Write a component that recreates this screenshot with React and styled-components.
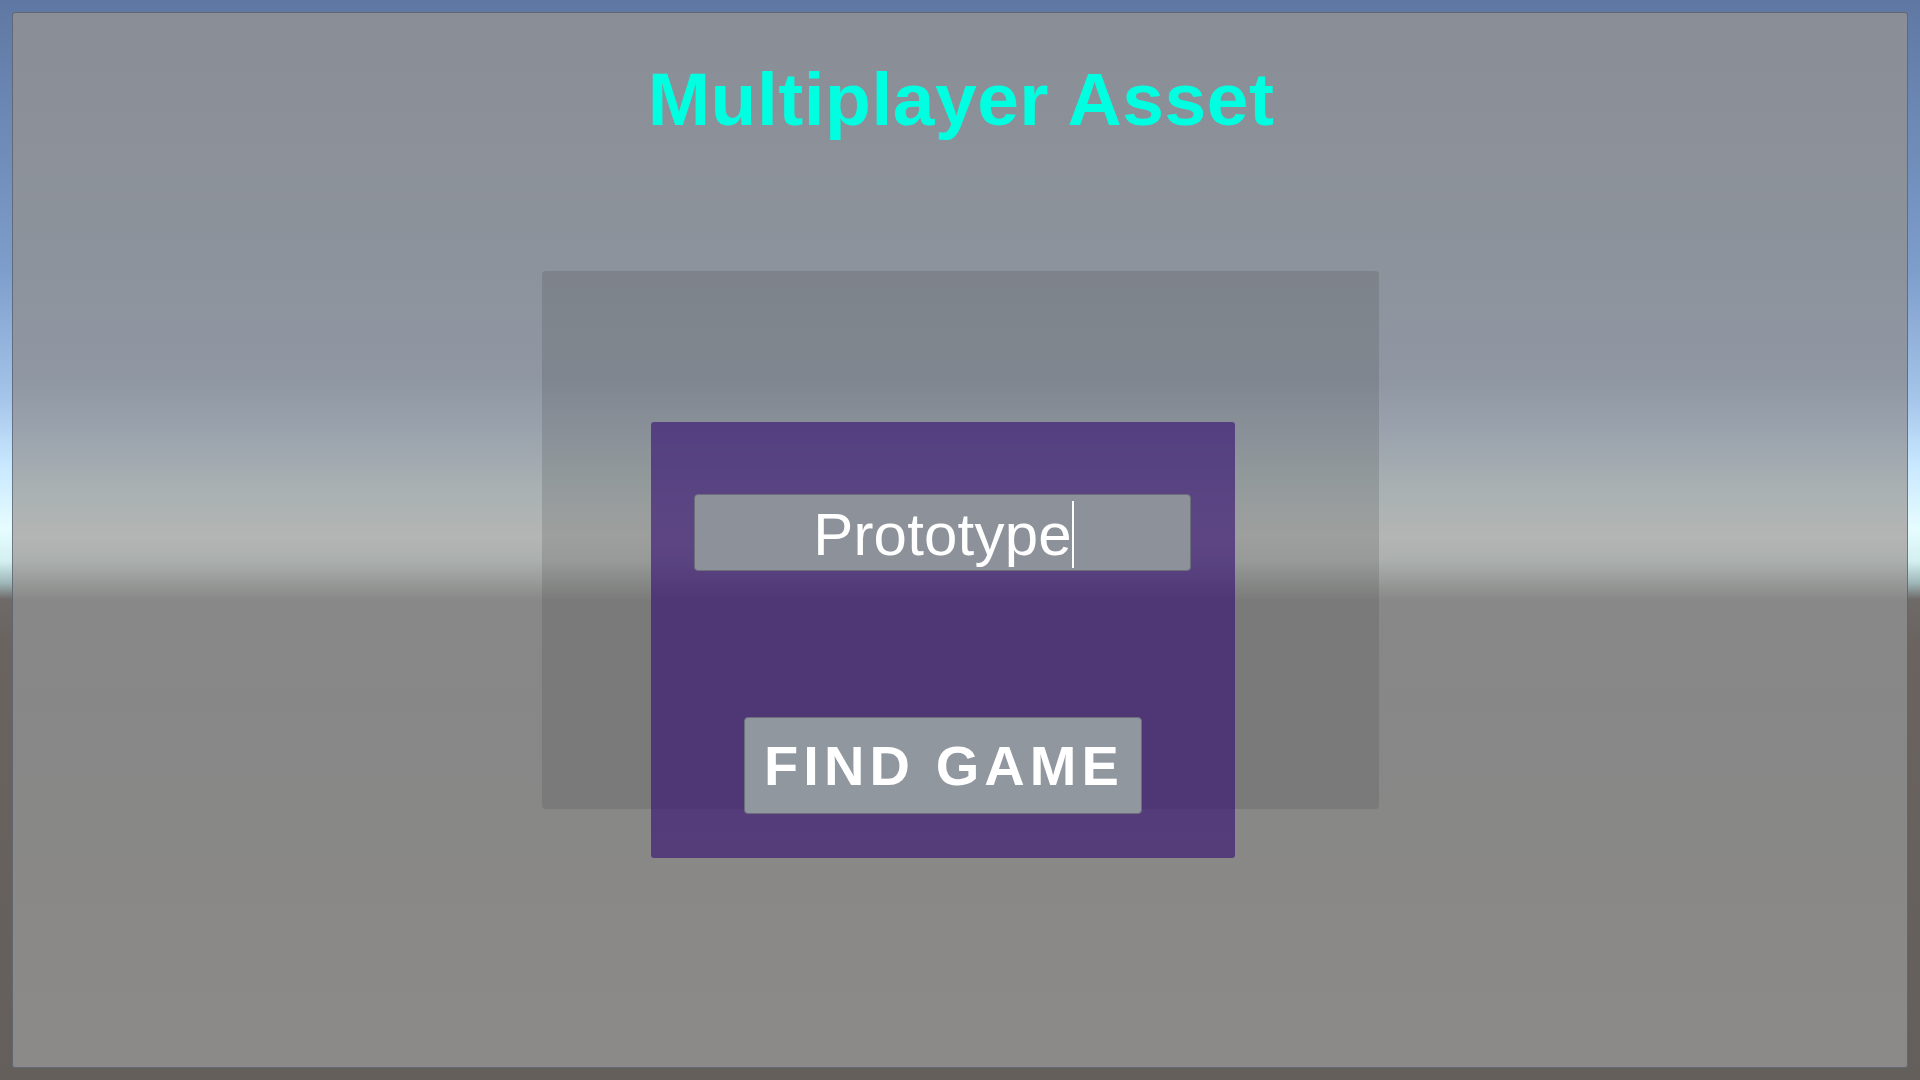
import React from 'react'
import styled, { createGlobalStyle } from 'styled-components'

const GlobalStyle = createGlobalStyle`
 html, body {
  margin: 0;
  padding: 0;
 }
 body {
  width: 1920px;
  height: 1080px;
  overflow: hidden;
  font-family: "Liberation Sans", Arial, sans-serif;
  background: linear-gradient(
   to bottom,
   #5f78a3 0%,
   #7d9dcb 25%,
   #a6c5ea 37%,
   #c8e8ff 43%,
   #e6fdff 49%,
   #d3efef 52%,
   #9db5b6 54%,
   #6e6a68 55.5%,
   #6a6360 60%,
   #645f5b 100%
  );
 }
`

const Screen = styled.div`
 box-sizing: border-box;
 width: 1920px;
 height: 1080px;
 padding: 12px;
`

const Overlay = styled.div`
 box-sizing: border-box;
 height: 100%;
 border: 1px solid rgba(70, 80, 100, 0.6);
 border-radius: 3px;
 display: flex;
 flex-direction: column;
 align-items: center;
 padding-top: 49px;
 background: linear-gradient(
  to bottom,
  #8a8e96 0%,
  #8d939c 24.4%,
  #8f97a3 34.8%,
  #9aa3ad 39.6%,
  #a9b1b2 45.3%,
  #b4b5b4 49.7%,
  #abb0ae 51.9%,
  #939593 54.5%,
  #888888 55.7%,
  #878787 65%,
  #8b8a88 100%
 );
`

const Title = styled.h1`
 margin: 0;
 font-family: "Liberation Sans", Arial, sans-serif;
 font-weight: 700;
 font-size: 75px;
 line-height: 1;
 letter-spacing: 0.5px;
 padding-left: 2px;
 color: #00ffe0;
`

const Backdrop = styled.div`
 box-sizing: border-box;
 margin-top: 134px;
 width: 837px;
 height: 538px;
 border-radius: 4px;
 background: rgba(70, 70, 70, 0.2);
 padding-top: 151px;
 padding-left: 109px;
`

const Card = styled.div`
 box-sizing: border-box;
 width: 584px;
 height: 436px;
 border-radius: 3px;
 background: rgba(50, 10, 114, 0.6);
 display: flex;
 flex-direction: column;
 align-items: center;
 padding-top: 72px;
`

const NameField = styled.div`
 box-sizing: border-box;
 width: 497px;
 height: 77px;
 border: 1px solid #6c6e7a;
 border-radius: 4px;
 background: #8d929a;
 display: flex;
 align-items: center;
 justify-content: center;
`

const NameText = styled.span`
 position: relative;
 font-family: "Liberation Sans", Arial, sans-serif;
 font-size: 60px;
 line-height: 1;
 letter-spacing: 0.2px;
 color: #ffffff;
 margin-top: 4px;

 &::after {
  content: '';
  position: absolute;
  right: -2px;
  top: -4px;
  width: 1.5px;
  height: 67px;
  background: #ffffff;
 }
`

const FindButton = styled.button`
 box-sizing: border-box;
 margin-top: 146px;
 width: 398px;
 height: 97px;
 border: 1px solid #6c6e7c;
 border-radius: 4px;
 background: #91979f;
 color: #ffffff;
 font-family: "Liberation Sans", Arial, sans-serif;
 font-weight: 700;
 font-size: 56px;
 line-height: 1;
 letter-spacing: 5.1px;
 padding: 0 0 0 3px;
 display: flex;
 align-items: center;
 justify-content: center;
 cursor: pointer;
`

export default function App() {
 return (
  <>
   <GlobalStyle />
   <Screen>
    <Overlay>
     <Title>Multiplayer Asset</Title>
     <Backdrop>
      <Card>
       <NameField>
        <NameText>Prototype</NameText>
       </NameField>
       <FindButton>FIND GAME</FindButton>
      </Card>
     </Backdrop>
    </Overlay>
   </Screen>
  </>
 )
}
